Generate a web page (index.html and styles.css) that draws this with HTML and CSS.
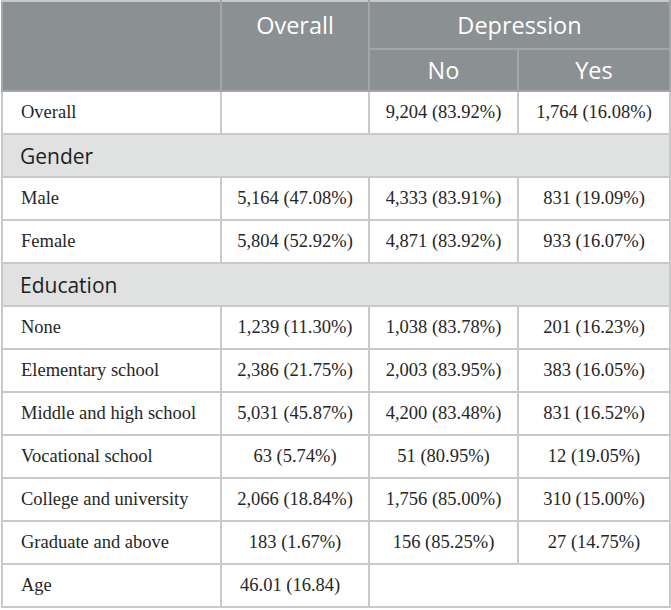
FILE: index.html
```html
<!DOCTYPE html>
<html>
<head>
<meta charset="utf-8">
<link rel="stylesheet" href="styles.css">
</head>
<body>
<table class="tbl">
  <colgroup>
    <col class="c1"><col class="c2"><col class="c3"><col class="c4">
  </colgroup>
  <thead>
    <tr class="h1">
      <th rowspan="2"></th>
      <th rowspan="2" class="top">Overall</th>
      <th colspan="2">Depression</th>
    </tr>
    <tr class="h2">
      <th>No</th>
      <th>Yes</th>
    </tr>
  </thead>
  <tbody>
    <tr><td class="lbl">Overall</td><td></td><td>9,204 (83.92%)</td><td>1,764 (16.08%)</td></tr>
    <tr class="sec"><td colspan="4">Gender</td></tr>
    <tr><td class="lbl">Male</td><td>5,164 (47.08%)</td><td>4,333 (83.91%)</td><td>831 (19.09%)</td></tr>
    <tr><td class="lbl">Female</td><td>5,804 (52.92%)</td><td>4,871 (83.92%)</td><td>933 (16.07%)</td></tr>
    <tr class="sec"><td colspan="4">Education</td></tr>
    <tr><td class="lbl">None</td><td>1,239 (11.30%)</td><td>1,038 (83.78%)</td><td>201 (16.23%)</td></tr>
    <tr><td class="lbl">Elementary school</td><td>2,386 (21.75%)</td><td>2,003 (83.95%)</td><td>383 (16.05%)</td></tr>
    <tr><td class="lbl">Middle and high school</td><td>5,031 (45.87%)</td><td>4,200 (83.48%)</td><td>831 (16.52%)</td></tr>
    <tr><td class="lbl">Vocational school</td><td>63 (5.74%)</td><td>51 (80.95%)</td><td>12 (19.05%)</td></tr>
    <tr><td class="lbl">College and university</td><td>2,066 (18.84%)</td><td>1,756 (85.00%)</td><td>310 (15.00%)</td></tr>
    <tr><td class="lbl">Graduate and above</td><td>183 (1.67%)</td><td>156 (85.25%)</td><td>27 (14.75%)</td></tr>
    <tr><td class="lbl">Age</td><td class="lbl">46.01 (16.84)</td><td class="blank" colspan="2"></td></tr>
  </tbody>
</table>
</body>
</html>
```
FILE: styles.css
```css
html, body {
  margin: 0;
  padding: 0;
  background: #ffffff;
}
.tbl {
  border-collapse: collapse;
  table-layout: fixed;
  width: 668px;
  margin: 0 0 0 1px;
  border: 2px solid #c9c9c9;
  font-family: "Liberation Serif", "Times New Roman", serif;
  font-size: 18.5px;
  color: #262626;
}
.c1 { width: 219px; }
.c2 { width: 148px; }
.c3 { width: 149px; }
.c4 { width: 152px; }
.tbl th {
  background: #8b9093;
  color: #ffffff;
  font-family: "Open Sans", "Noto Sans", sans-serif;
  font-weight: 400;
  font-size: 23.5px;
  border: 2px solid #a3a6a8;
  padding: 0;
  text-align: center;
}
.h1 th { height: 46px; vertical-align: middle; }
.h1 th.top { vertical-align: top; padding-top: 7px; }
.h2 th { height: 40px; }
.tbl thead tr:first-child th { border-top-color: #c9c9c9; }
.tbl td {
  border: 2px solid #c9c9c9;
  height: 41px;
  padding: 0 10px;
  text-align: center;
  white-space: nowrap;
}
.tbl td.lbl { text-align: left; padding-left: 18px; }
.sec td {
  background: #e0e1e1;
  font-family: "Open Sans", "Noto Sans", sans-serif;
  font-size: 21px;
  color: #1e1e1e;
  text-align: left;
  padding-left: 17px;
}
```
